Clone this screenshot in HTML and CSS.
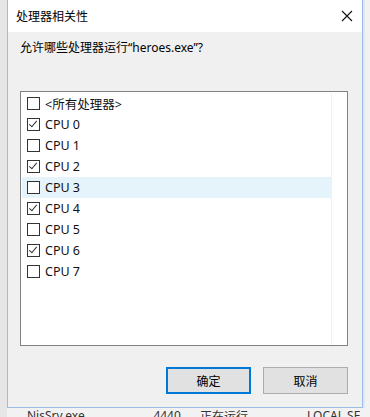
FILE: index.html
```html
<!DOCTYPE html>
<html lang="zh-CN">
<head>
<meta charset="utf-8">
<title>处理器相关性</title>
<link rel="stylesheet" href="styles.css">
</head>
<body>
<div class="stage">
  <div class="dialog">
    <div class="titlebar">
      <span class="title">处理器相关性</span>
      <svg class="close" width="12" height="12" viewBox="0 0 12 12"><path d="M1 1 L11 11 M11 1 L1 11" stroke="#111" stroke-width="1.1" fill="none"/></svg>
    </div>
    <div class="content">
      <p class="prompt">允许哪些处理器运行“heroes.exe”?</p>
      <div class="list">
        <div class="column">
          <div class="item"><span class="box"></span><span class="label">&lt;所有处理器&gt;</span></div>
          <div class="item"><span class="box checked"></span><span class="label">CPU 0</span></div>
          <div class="item"><span class="box"></span><span class="label">CPU 1</span></div>
          <div class="item"><span class="box checked"></span><span class="label">CPU 2</span></div>
          <div class="item hover"><span class="box"></span><span class="label">CPU 3</span></div>
          <div class="item"><span class="box checked"></span><span class="label">CPU 4</span></div>
          <div class="item"><span class="box"></span><span class="label">CPU 5</span></div>
          <div class="item"><span class="box checked"></span><span class="label">CPU 6</span></div>
          <div class="item"><span class="box"></span><span class="label">CPU 7</span></div>
        </div>
      </div>
      <div class="buttons">
        <button class="btn primary">确定</button>
        <button class="btn">取消</button>
      </div>
    </div>
  </div>
  <div class="behind">
    <span class="b1">NisSrv.exe</span><span class="b2">4440</span><span class="b3">正在运行</span><span class="b4">LOCAL SE...</span>
  </div>
</div>
</body>
</html>
```
FILE: styles.css
```css
html, body {
  margin: 0;
  padding: 0;
  background: #f0f0f0;
  font-family: "Noto Sans", "Noto Sans CJK SC", sans-serif;
  font-size: 12px;
  color: #000;
}
.stage {
  width: 370px;
  height: 417px;
  overflow: hidden;
  background: linear-gradient(to right, #e6e6e6 0, #e6e6e6 7px, #f2f2f2 7px);
  padding-left: 7px;
  box-sizing: border-box;
}
.dialog {
  width: 356px;
  height: 408px;
  box-sizing: border-box;
  border: 1px solid #9cbde3;
  border-top: none;
  background: #f0f0f0;
  display: flex;
  flex-direction: column;
  box-shadow: 2px 0 0 #e2e8f0;
}
.titlebar {
  height: 31px;
  background: #fff;
  display: flex;
  align-items: center;
  justify-content: space-between;
  padding: 0 10px 1px 8px;
  flex-shrink: 0;
}
.title {
  font-family: "Noto Sans CJK SC", sans-serif;
  font-size: 12px;
  margin-top: -1px;
}
.close {
  margin-right: -1px;
}
.content {
  flex: 1;
  display: flex;
  flex-direction: column;
  padding: 0 14px 0 12px;
}
.prompt {
  margin: 7px 0 0 0;
  font-family: "Noto Sans", "Noto Sans CJK SC", sans-serif;
  font-size: 12px;
  line-height: 18px;
}
.list {
  margin-top: 34px;
  height: 255px;
  box-sizing: border-box;
  border: 1px solid #828282;
  background: #fff;
  padding: 1px 0 0 1px;
  display: flex;
}
.column {
  width: 309px;
  border-right: 1px solid #f0f0f0;
}
.item {
  height: 21px;
  display: flex;
  align-items: center;
  padding-left: 5px;
}
.item.hover {
  background: #e5f3fb;
}
.box {
  width: 13px;
  height: 13px;
  box-sizing: border-box;
  border: 1px solid #333;
  background: #fff;
  position: relative;
  flex-shrink: 0;
}
.box.checked::after {
  content: "";
  position: absolute;
  left: 3px;
  top: 0px;
  width: 3px;
  height: 7px;
  border-right: 1px solid #333;
  border-bottom: 1px solid #333;
  transform: rotate(40deg);
}
.label {
  margin-left: 5px;
  font-size: 12.5px;
  color: #111;
}
.buttons {
  display: flex;
  justify-content: flex-end;
  gap: 12px;
  margin-top: 21px;
}
.btn {
  width: 85px;
  height: 27px;
  box-sizing: border-box;
  border: 1px solid #adadad;
  background: #e1e1e1;
  font-family: "Noto Sans CJK SC", sans-serif;
  font-size: 12px;
  color: #000;
  padding: 0;
}
.btn.primary {
  border: 2px solid #0078d7;
}
.behind {
  height: 9px;
  overflow: hidden;
  display: flex;
  font-size: 12px;
  line-height: 14px;
  color: #333;
  margin-top: 1px;
  padding-left: 20px;
}
.behind span { white-space: nowrap; }
.b1 { width: 130px; }
.b2 { width: 48px; }
.b3 { width: 110px; font-family: "Noto Sans CJK SC", sans-serif; }
```
